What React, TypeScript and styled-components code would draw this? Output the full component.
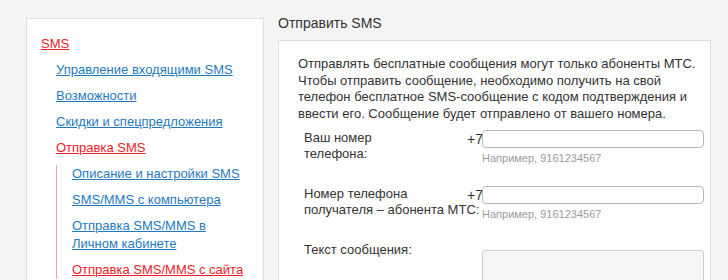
import styled, { createGlobalStyle } from 'styled-components';

const GlobalStyle = createGlobalStyle`
  html, body {
    margin: 0;
    padding: 0;
    background: #f4f4f4;
    font-family: "Liberation Sans", Arial, sans-serif;
    font-size: 13px;
    color: #333;
  }
`;

const Page = styled.div`
  display: grid;
  grid-template-columns: 238px 433px;
  column-gap: 14px;
  padding: 18px 0 0 26px;
  height: 262px;
  overflow: hidden;
`;

const Sidebar = styled.nav`
  background: #fff;
  border: 1px solid #dedede;
  border-bottom: none;
  padding: 16px 14px 0 14px;
`;

const RootList = styled.ul`
  list-style: none;
  margin: 0;
  padding: 0;
`;

const NavList = styled.ul<{ $nested?: boolean }>`
  list-style: none;
  margin: 8px 0 0;
  padding: 0 0 0 15px;
  border-left: ${(p) => (p.$nested ? '1px solid #f3a3a3' : 'none')};
`;

const NavItem = styled.li`
  line-height: 18px;
  & + & { margin-top: 8px; }
`;

const NavLink = styled.a<{ $active?: boolean }>`
  color: ${(p) => (p.$active ? '#ee2128' : '#1f7ac2')};
  text-decoration: underline;
  cursor: pointer;
`;

const Main = styled.main`
  display: flex;
  flex-direction: column;
`;

const Title = styled.h2`
  margin: -3px 0 9px;
  font-size: 14px;
  font-weight: normal;
  line-height: 16px;
  color: #333;
`;

const Card = styled.section`
  background: #fff;
  border: 1px solid #dedede;
  border-bottom: none;
  padding: 15px 5px 0 19px;
  flex: 1;
`;

const Intro = styled.p`
  margin: 0 0 8px;
  line-height: 16.5px;
  color: #333;
`;

const Row = styled.div`
  display: grid;
  grid-template-columns: 163px 15px 222px;
  padding-left: 6px;
  margin-bottom: 20px;
`;

const Label = styled.label`
  line-height: 16px;
  white-space: nowrap;
  color: #333;
`;

const Prefix = styled.span`
  font-size: 14px;
  line-height: 18px;
  color: #333;
`;

const Field = styled.div<{ $offset?: number }>`
  display: flex;
  flex-direction: column;
  padding-top: ${(p) => p.$offset ?? 0}px;
`;

const Input = styled.input`
  box-sizing: border-box;
  width: 222px;
  height: 18px;
  margin: 0;
  border: 1px solid #b9b9b9;
  border-radius: 4px;
  background: #fff;
  font: inherit;
  padding: 0 6px;
`;

const Hint = styled.span`
  font-size: 11px;
  line-height: 16px;
  margin-top: 2px;
  color: #9a9a9a;
`;

const TextArea = styled.textarea`
  box-sizing: border-box;
  width: 222px;
  height: 60px;
  margin: 0;
  border: 1px solid #cfcfcf;
  border-radius: 3px;
  background: #f6f6f6;
  resize: none;
  font: inherit;
`;

const subLinks = [
  { label: 'Описание и настройки SMS' },
  { label: 'SMS/MMS с компьютера' },
  { label: 'Отправка SMS/MMS в Личном кабинете' },
  { label: 'Отправка SMS/MMS с сайта', active: true },
];

const App = () => (
  <>
    <GlobalStyle />
    <Page>
      <Sidebar>
        <RootList>
          <NavItem>
            <NavLink $active>SMS</NavLink>
            <NavList>
              <NavItem><NavLink>Управление входящими SMS</NavLink></NavItem>
              <NavItem><NavLink>Возможности</NavLink></NavItem>
              <NavItem><NavLink>Скидки и спецпредложения</NavLink></NavItem>
              <NavItem>
                <NavLink $active>Отправка SMS</NavLink>
                <NavList $nested>
                  {subLinks.map((l) => (
                    <NavItem key={l.label}>
                      <NavLink $active={l.active}>{l.label}</NavLink>
                    </NavItem>
                  ))}
                </NavList>
              </NavItem>
            </NavList>
          </NavItem>
        </RootList>
      </Sidebar>
      <Main>
        <Title>Отправить SMS</Title>
        <Card>
          <Intro>
            Отправлять бесплатные сообщения могут только абоненты МТС. Чтобы отправить
            сообщение, необходимо получить на свой телефон бесплатное SMS-сообщение с кодом
            подтверждения и ввести его. Сообщение будет отправлено от вашего номера.
          </Intro>
          <Row>
            <Label>Ваш номер<br />телефона:</Label>
            <Prefix>+7</Prefix>
            <Field>
              <Input type="text" />
              <Hint>Например, 9161234567</Hint>
            </Field>
          </Row>
          <Row>
            <Label>Номер телефона<br />получателя – абонента МТС:</Label>
            <Prefix>+7</Prefix>
            <Field>
              <Input type="text" />
              <Hint>Например, 9161234567</Hint>
            </Field>
          </Row>
          <Row>
            <Label>Текст сообщения:</Label>
            <span />
            <Field $offset={8}>
              <TextArea />
            </Field>
          </Row>
        </Card>
      </Main>
    </Page>
  </>
);

export default App;
